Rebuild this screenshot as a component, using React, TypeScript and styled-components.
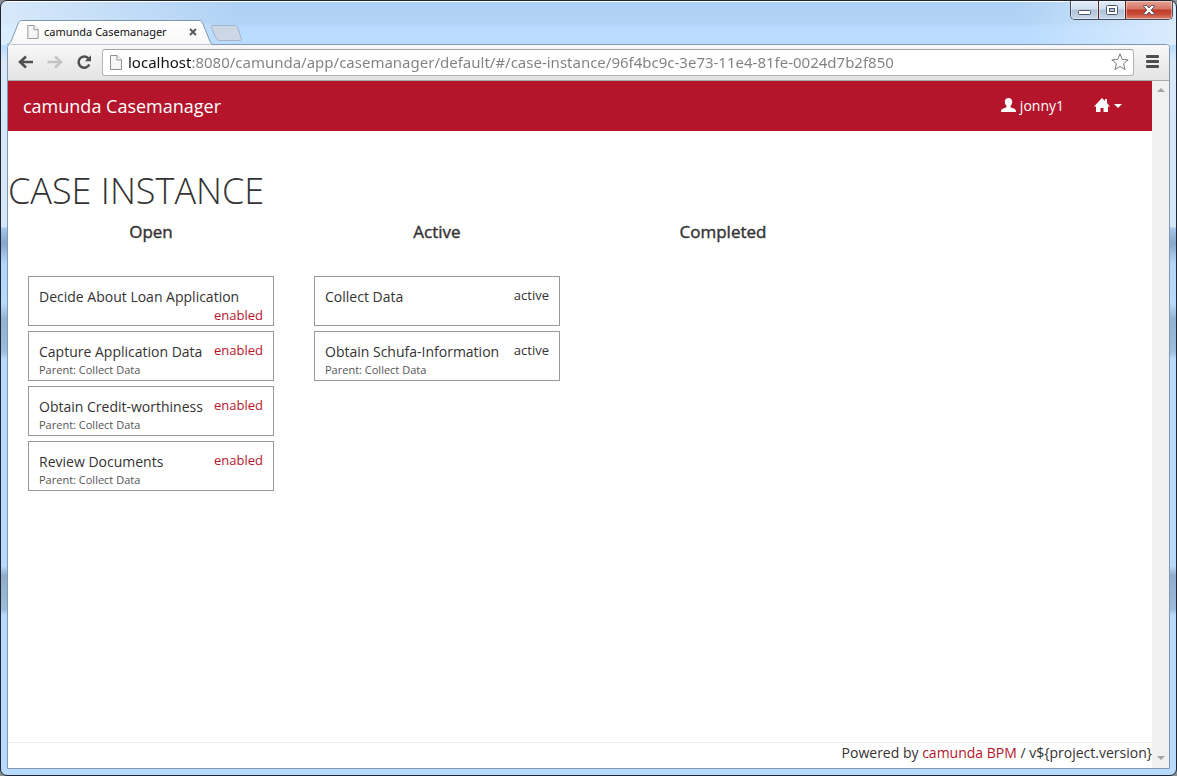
import React from "react";
import styled, { createGlobalStyle } from "styled-components";

const GlobalStyle = createGlobalStyle`
  * { box-sizing: border-box; }
  body {
    margin: 0;
    background: #8a8f96;
    color: #333;
    font-family: "Open Sans", "Noto Sans", sans-serif;
    font-size: 14px;
    line-height: 20px;
  }
  button { border: 0; padding: 0; background: none; color: inherit; font: inherit; }
  svg { display: block; }
`;

const brandRed = "#b5152b";

const BrowserWindow = styled.div`
  display: flex;
  flex-direction: column;
  min-height: 100vh;
  padding: 0 6px 6px;
  border: 1px solid #1f2530;
  border-radius: 7px;
  background:
    linear-gradient(#fff, #fff) 0 0 / 100% 1px no-repeat,
    linear-gradient(to right, rgba(255, 255, 255, 0.5) 0, rgba(255, 255, 255, 0) 240px) 0 0 / 100% 44px no-repeat,
    linear-gradient(to left, rgba(222, 237, 253, 0.9) 0, rgba(213, 232, 252, 0) 160px) 0 0 / 100% 44px no-repeat,
    linear-gradient(#add0f4 0, #b1d3f6 22px, #b8dbff 27px, #b8dbff 44px, #d9e9fa 60px, #d5e6f9 226px,
      #a5c8ee 227px, #86a7ca 242px, #b3d5fa 262px, #b8dafc 302px, #92b2d2 318px, #9cbcdd 350px,
      #b8dafe 358px, #b8dafe 565px, #8fadcb 575px, #9dbcdc 608px, #b8dafe 614px, #b8dafe 100%);
`;

const TitleBar = styled.header`
  display: flex;
  align-items: flex-start;
  justify-content: space-between;
  height: 43px;
`;

const TabStrip = styled.div`
  display: flex;
  align-self: flex-end;
  align-items: flex-end;
`;

const Tab = styled.div`
  position: relative;
  display: flex;
  align-items: center;
  gap: 5px;
  width: 203px;
  height: 24px;
  padding: 0 13px 0 20px;
  color: #111;
  font-family: "Noto Sans", "Open Sans", sans-serif;
  font-size: 11px;
`;

const TabShape = styled.svg`
  position: absolute;
  left: 0;
  top: 0;
`;

const TabTitle = styled.span`
  position: relative;
  flex: 1;
  white-space: nowrap;
`;

const TabIcon = styled.span`
  position: relative;
`;

const TabClose = styled.button`
  position: relative;
`;

const NewTab = styled.button`
  margin-bottom: 2px;
`;

const WindowControls = styled.div`
  display: flex;
  height: 19px;
  margin-right: -3px;
  border: 1px solid #444d5b;
  border-top: 0;
  border-radius: 0 0 5px 5px;
  overflow: hidden;
`;

const WindowButton = styled.button<{ $close?: boolean }>`
  display: flex;
  align-items: center;
  justify-content: center;
  width: ${(p) => (p.$close ? 47 : 27)}px;
  border-left: ${(p) => (p.$close ? "1px solid #5b2020" : "0")};
  background: ${(p) =>
    p.$close
      ? "linear-gradient(#e6a294 0, #d67566 8px, #bf3d29 9px, #c64a36 13px, #e0826e 100%)"
      : "linear-gradient(#e4eefa 0, #d0deee 8px, #b1c2d6 9px, #c6d8ec 100%)"};
  box-shadow: inset 0 0 0 1px rgba(255, 255, 255, 0.4);

  & + & {
    border-left: 1px solid ${(p) => (p.$close ? "#5b2020" : "#76859a")};
  }
`;

const Client = styled.div`
  display: flex;
  flex: 1;
  flex-direction: column;
  border: 1px solid #8198b0;
  border-radius: 4px 4px 0 0;
  background: #fff;
`;

const Toolbar = styled.div`
  display: flex;
  align-items: center;
  height: 36px;
  padding: 0 9px 1px 10px;
  border-bottom: 1px solid #a9a9a9;
  border-radius: 3px 3px 0 0;
  background: linear-gradient(#f8f8f8, #e3e3e3);
`;

const NavButtons = styled.div`
  display: flex;
  align-items: center;
  gap: 13px;
  margin-right: 10px;
`;

const AddressBar = styled.div`
  display: flex;
  flex: 1;
  align-items: center;
  gap: 6px;
  height: 27px;
  margin-right: 12px;
  padding: 0 4px 0 7px;
  border: 1px solid #b4b4b4;
  border-top-color: #a3a3a3;
  border-radius: 3px;
  background: #fff;
`;

const AddressInput = styled.input`
  flex: 1;
  min-width: 0;
  height: 24px;
  padding: 0;
  border: 0;
  outline: 0;
  color: #808080;
  font-family: "Noto Sans", "Open Sans", sans-serif;
  font-size: 15px;
  background: linear-gradient(to right, #111 63px, #808080 63px);
  background-clip: text;
  -webkit-text-fill-color: transparent;
`;

const Viewport = styled.div`
  display: flex;
  flex: 1;
`;

const Page = styled.div`
  display: flex;
  flex: 1;
  flex-direction: column;
  min-width: 0;
`;

const Scrollbar = styled.div`
  display: flex;
  flex-direction: column;
  align-items: center;
  justify-content: space-between;
  width: 17px;
  padding: 7px 0 8px;
  background: #f0f0f0;
`;

const Navbar = styled.nav`
  display: flex;
  align-items: center;
  justify-content: space-between;
  height: 50px;
  padding: 0 30px 0 15px;
  background: ${brandRed};
  color: #fff;
`;

const Brand = styled.a`
  color: inherit;
  font-size: 18px;
  text-decoration: none;
`;

const NavMenu = styled.div`
  display: flex;
  gap: 30px;
`;

const NavItem = styled.button`
  display: flex;
  align-items: center;
  gap: 4px;
`;

const Content = styled.main`
  flex: 1;
  padding-top: 40px;
`;

const PageTitle = styled.h1`
  margin: 0;
  font-size: 36px;
  font-weight: 300;
  line-height: 40px;
  text-transform: uppercase;
`;

const Board = styled.div`
  display: grid;
  grid-template-columns: repeat(4, 1fr);
`;

const Column = styled.section`
  padding: 11px 20px 0;
`;

const ColumnTitle = styled.h2`
  margin: 0 0 34px;
  font-size: 17px;
  font-weight: 500;
  line-height: 20px;
  text-align: center;
  -webkit-text-stroke: 0.4px #333;
`;

const Card = styled.article`
  display: flex;
  flex-wrap: wrap;
  align-content: flex-start;
  justify-content: space-between;
  min-height: 50px;
  margin-bottom: 5px;
  padding: 10px 10px 0;
  border: 1px solid #999;
`;

const CardText = styled.div`
  line-height: 20px;
`;

const CardParent = styled.div`
  color: #555;
  font-size: 11px;
  line-height: 16px;
`;

const CardState = styled.span<{ $enabled: boolean }>`
  margin-left: auto;
  color: ${(p) => (p.$enabled ? brandRed : "#333")};
  font-size: 13px;
  line-height: 16px;
`;

const Footer = styled.footer`
  height: 26px;
  border-top: 1px solid #eee;
  text-align: right;
`;

const FooterLink = styled.a`
  color: ${brandRed};
  text-decoration: none;
`;

interface Item {
  name: string;
  state: "enabled" | "active";
  parent?: string;
}

const columns: { title: string; items: Item[] }[] = [
  {
    title: "Open",
    items: [
      { name: "Decide About Loan Application", state: "enabled" },
      { name: "Capture Application Data", state: "enabled", parent: "Collect Data" },
      { name: "Obtain Credit-worthiness", state: "enabled", parent: "Collect Data" },
      { name: "Review Documents", state: "enabled", parent: "Collect Data" },
    ],
  },
  {
    title: "Active",
    items: [
      { name: "Collect Data", state: "active" },
      { name: "Obtain Schufa-Information", state: "active", parent: "Collect Data" },
    ],
  },
  { title: "Completed", items: [] },
];

const PageIcon = ({ width, height }: { width: number; height: number }) => (
  <svg width={width} height={height} viewBox="0 0 12 15" fill="#f6f6f6" stroke="#8f8f8f">
    <path d="M.5.5h6.5l4.500 4.500v9.500h-11z" />
    <path d="M7 .5v4.500h4.500" fill="#fff" />
  </svg>
);

export default function App() {
  return (
    <>
      <GlobalStyle />
      <BrowserWindow>
        <TitleBar>
          <TabStrip>
            <Tab>
              <TabShape width="208" height="25" viewBox="0 0 208 25">
                <defs>
                  <linearGradient id="tabFill" x1="0" y1="0" x2="0" y2="1">
                    <stop offset="0" stopColor="#fff" />
                    <stop offset="1" stopColor="#f8f8f8" />
                  </linearGradient>
                </defs>
                <path
                  d="M0 24.500C3 24 4 22 5 19L11 4C12 1.500 13 .5 15 .5H192C194 .5 195 1.500 196 4L202 19C203 22 204 24 206 24.500"
                  fill="url(#tabFill)"
                  stroke="#8198b0"
                />
              </TabShape>
              <TabIcon>
                <PageIcon width={12} height={14} />
              </TabIcon>
              <TabTitle>camunda Casemanager</TabTitle>
              <TabClose aria-label="Close tab">
                <svg width="8" height="8" viewBox="0 0 8 8" stroke="#555" strokeWidth="1.800">
                  <path d="M1 1l6 6M7 1l-6 6" />
                </svg>
              </TabClose>
            </Tab>
            <NewTab aria-label="New tab">
              <svg width="34" height="17" viewBox="0 0 34 17">
                <path
                  d="M3 .5H24C26 .5 27 1 28 3L31 13C32 15 31 15.500 30 15.500H10C8 15.500 7 15 6 13L1.500 3C1 1 1.500 .5 3 .5Z"
                  fill="#cbd7e4"
                  stroke="#a3b5c8"
                />
              </svg>
            </NewTab>
          </TabStrip>
          <WindowControls>
            <WindowButton aria-label="Minimize">
              <svg width="13" height="10" viewBox="0 0 13 10">
                <rect x=".5" y="5.500" width="12" height="4" rx="1" fill="#fff" stroke="#4c5565" />
              </svg>
            </WindowButton>
            <WindowButton aria-label="Maximize">
              <svg width="12" height="10" viewBox="0 0 12 10" stroke="#4c5565">
                <rect x=".5" y=".5" width="11" height="9" rx="1" fill="#fff" />
                <rect x="3.500" y="3.500" width="5" height="3" fill="#b5c6da" />
              </svg>
            </WindowButton>
            <WindowButton $close aria-label="Close">
              <svg width="12" height="10" viewBox="0 0 12 10">
                <path
                  d="M.7 .6h3.100L6 3 8.200 .6h3.100v1L8.200 5l3.100 3.400v1H8.200L6 7 3.800 9.400H.7v-1L3.800 5 .7 1.600z"
                  fill="#fff"
                  stroke="#4b4657"
                  strokeWidth=".9"
                />
              </svg>
            </WindowButton>
          </WindowControls>
        </TitleBar>
        <Client>
          <Toolbar>
            <NavButtons>
              <button aria-label="Back">
                <svg width="16" height="14" viewBox="0 0 16 14" fill="none" stroke="#505050" strokeWidth="2.600">
                  <path d="M8 1.500L2 7l6 5.500M2 7h13" />
                </svg>
              </button>
              <button aria-label="Forward">
                <svg width="16" height="14" viewBox="0 0 16 14" fill="none" stroke="#c4c4c4" strokeWidth="2.600">
                  <path d="M8 1.500l6 5.500-6 5.500M14 7H.5" />
                </svg>
              </button>
              <button aria-label="Reload">
                <svg width="16" height="16" viewBox="0 0 16 16" fill="none">
                  <path d="M12.300 4.300A5.600 5.600 0 1 0 13.300 10.500" stroke="#505050" strokeWidth="2.500" />
                  <path d="M15 1.200V7.300H8.800z" fill="#505050" />
                </svg>
              </button>
            </NavButtons>
            <AddressBar>
              <PageIcon width={12} height={15} />
              <AddressInput
                aria-label="Address"
                defaultValue="localhost:8080/camunda/app/casemanager/default/#/case-instance/96f4bc9c-3e73-11e4-81fe-0024d7b2f850"
              />
              <button aria-label="Bookmark">
                <svg width="18" height="18" viewBox="0 0 18 18" fill="#fff" stroke="#7a7a7a" strokeLinejoin="round">
                  <path d="M9 .8l2.200 5.700 6 .3-4.700 3.900 1.600 6L9 13.400l-5.100 3.300 1.600-6L.8 6.800l6-.3z" />
                </svg>
              </button>
            </AddressBar>
            <button aria-label="Menu">
              <svg width="14" height="14" viewBox="0 0 14 14" fill="#4e4e4e">
                <rect y="0" width="13" height="3" rx="1" />
                <rect y="5" width="13" height="3" rx="1" />
                <rect y="10" width="13" height="3" rx="1" />
              </svg>
            </button>
          </Toolbar>
          <Viewport>
            <Page>
              <Navbar>
                <Brand href="#">camunda Casemanager</Brand>
                <NavMenu>
                  <NavItem>
                    <svg width="15" height="16" viewBox="0 0 15 16" fill="#fff">
                      <path d="M7.500 0C9.800 0 11.300 1.500 11.200 3.900 11.100 5.600 10.400 7 9.500 7.900V9C9.800 9.700 11.700 10 13.300 10.800 14.600 11.400 15 12 15 14H0C0 12 .4 11.400 1.700 10.800 3.300 10 5.200 9.700 5.500 9V7.900C4.600 7 3.900 5.600 3.800 3.900 3.700 1.500 5.200 0 7.500 0Z" />
                    </svg>
                    jonny1
                  </NavItem>
                  <NavItem aria-label="Home menu">
                    <svg width="16" height="16" viewBox="0 0 16 16" fill="#fff">
                      <path d="M8 0L11 3V1h2v4l3 3.500h-2V14H9.500V10h-3v4H2V8.500H0z" />
                    </svg>
                    <svg width="8" height="4" viewBox="0 0 8 4" fill="#fff">
                      <path d="M0 0h8L4 4z" />
                    </svg>
                  </NavItem>
                </NavMenu>
              </Navbar>
              <Content>
                <PageTitle>Case Instance</PageTitle>
                <Board>
                  {columns.map((column) => (
                    <Column key={column.title}>
                      <ColumnTitle>{column.title}</ColumnTitle>
                      {column.items.map((item) => (
                        <Card key={item.name}>
                          <CardText>
                            {item.name}
                            {item.parent && <CardParent>Parent: {item.parent}</CardParent>}
                          </CardText>
                          <CardState $enabled={item.state === "enabled"}>{item.state}</CardState>
                        </Card>
                      ))}
                    </Column>
                  ))}
                </Board>
              </Content>
              <Footer>
                Powered by <FooterLink href="#">camunda BPM</FooterLink> / v{"${project.version}"}
              </Footer>
            </Page>
            <Scrollbar aria-hidden="true">
              <svg width="8" height="4" viewBox="0 0 8 4" fill="#a3a3a3">
                <path d="M0 4h8L4 0z" />
              </svg>
              <svg width="8" height="4" viewBox="0 0 8 4" fill="#a3a3a3">
                <path d="M0 0h8L4 4z" />
              </svg>
            </Scrollbar>
          </Viewport>
        </Client>
      </BrowserWindow>
    </>
  );
}
